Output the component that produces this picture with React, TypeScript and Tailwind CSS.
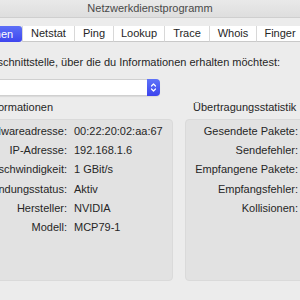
import React from 'react';

const tabs = [
  { name: 'Informationen', w: 'w-[85px] -ml-[63px]', active: true },
  { name: 'Netstat', w: 'w-[52px]' },
  { name: 'Ping', w: 'w-[39px]' },
  { name: 'Lookup', w: 'w-[51px]' },
  { name: 'Trace', w: 'w-[45px]' },
  { name: 'Whois', w: 'w-[47px]' },
  { name: 'Finger', w: 'w-[47px]' },
];

const infoRows = [
  ['Hardwareadresse:', '00:22:20:02:aa:67'],
  ['IP-Adresse:', '192.168.1.6'],
  ['Verbindungsgeschwindigkeit:', '1 GBit/s'],
  ['Verbindungsstatus:', 'Aktiv'],
  ['Hersteller:', 'NVIDIA'],
  ['Modell:', 'MCP79-1'],
];

const statRows = [
  'Gesendete Pakete:',
  'Sendefehler:',
  'Empfangene Pakete:',
  'Empfangsfehler:',
  'Kollisionen:',
];

export default function App() {
  return (
    <div className="w-[300px] h-[300px] overflow-hidden bg-[#ececec] text-[11px] text-[#262626] font-['Liberation_Sans',Arial,sans-serif]">
      {/* Title bar */}
      <div className="h-[18px] flex items-center justify-center bg-gradient-to-b from-[#e9e9e9] to-[#dedede] border-b border-[#cfcfcf] text-[#4a4a4a]">
        Netzwerkdienstprogramm
      </div>

      {/* Tabs */}
      <div className="mt-[8px] flex h-[16px] whitespace-nowrap">
        {tabs.map((t) => (
          <div
            key={t.name}
            className={`${t.w} shrink-0 flex items-center justify-center ${
              t.active
                ? 'bg-gradient-to-b from-[#5d6ff7] to-[#3f45ee] text-white rounded-r-[3px]'
                : 'bg-white border-l border-[#d8d8d8] border-b border-b-[#c9c9c9]'
            }`}
          >
            {t.name}
          </div>
        ))}
      </div>

      {/* Interface chooser */}
      <div className="mt-[14px] w-[280px] flex justify-end whitespace-nowrap leading-[13px]">
        <span className="shrink-0">Wähle die Netzwerkschnittstelle, über die du Informationen erhalten möchtest:</span>
      </div>

      <div className="mt-[10px] -ml-[10px] w-[170px] h-[17px] flex bg-white border border-[#d0d0d0] rounded-[4px] shadow-[0_1px_1px_rgba(0,0,0,0.08)]">
        <div className="flex-1" />
        <div className="w-[13px] -my-px -mr-px rounded-r-[4px] bg-gradient-to-b from-[#5f73f8] to-[#3d42ee] flex items-center justify-center">
          <svg width="7" height="11" viewBox="0 0 7 11" fill="none" stroke="white" strokeWidth="1.2" strokeLinecap="round" strokeLinejoin="round">
            <path d="M1.5 4 L3.5 2 L5.5 4" />
            <path d="M1.5 7 L3.5 9 L5.5 7" />
          </svg>
        </div>
      </div>

      {/* Panels */}
      <div className="mt-[5px] flex gap-[12px] leading-[13px]">
        <div className="-ml-[20px] w-[193px] shrink-0 flex flex-col">
          <div className="w-[73px] flex justify-end whitespace-nowrap">
            <span className="shrink-0">Schnittstelleninformationen</span>
          </div>
          <div className="mt-[5px] h-[162px] rounded-[4px] bg-[#e2e2e2] border border-[#dadada] pt-[5px] grid grid-cols-[86px_1fr] gap-x-[7px] auto-rows-[19.2px] content-start">
            {infoRows.map(([label, value]) => (
              <React.Fragment key={label}>
                <div className="flex justify-end whitespace-nowrap">
                  <span className="shrink-0">{label}</span>
                </div>
                <div className="whitespace-nowrap">{value}</div>
              </React.Fragment>
            ))}
          </div>
        </div>

        <div className="w-[140px] shrink-0 flex flex-col">
          <div className="pl-[8px] whitespace-nowrap">Übertragungsstatistik</div>
          <div className="mt-[5px] h-[162px] rounded-[4px] bg-[#e2e2e2] border border-[#dadada] pt-[5px] grid grid-cols-[112px_1fr] auto-rows-[19.2px] content-start">
            {statRows.map((label) => (
              <React.Fragment key={label}>
                <div className="flex justify-end whitespace-nowrap">
                  <span className="shrink-0">{label}</span>
                </div>
                <div />
              </React.Fragment>
            ))}
          </div>
        </div>
      </div>
    </div>
  );
}
